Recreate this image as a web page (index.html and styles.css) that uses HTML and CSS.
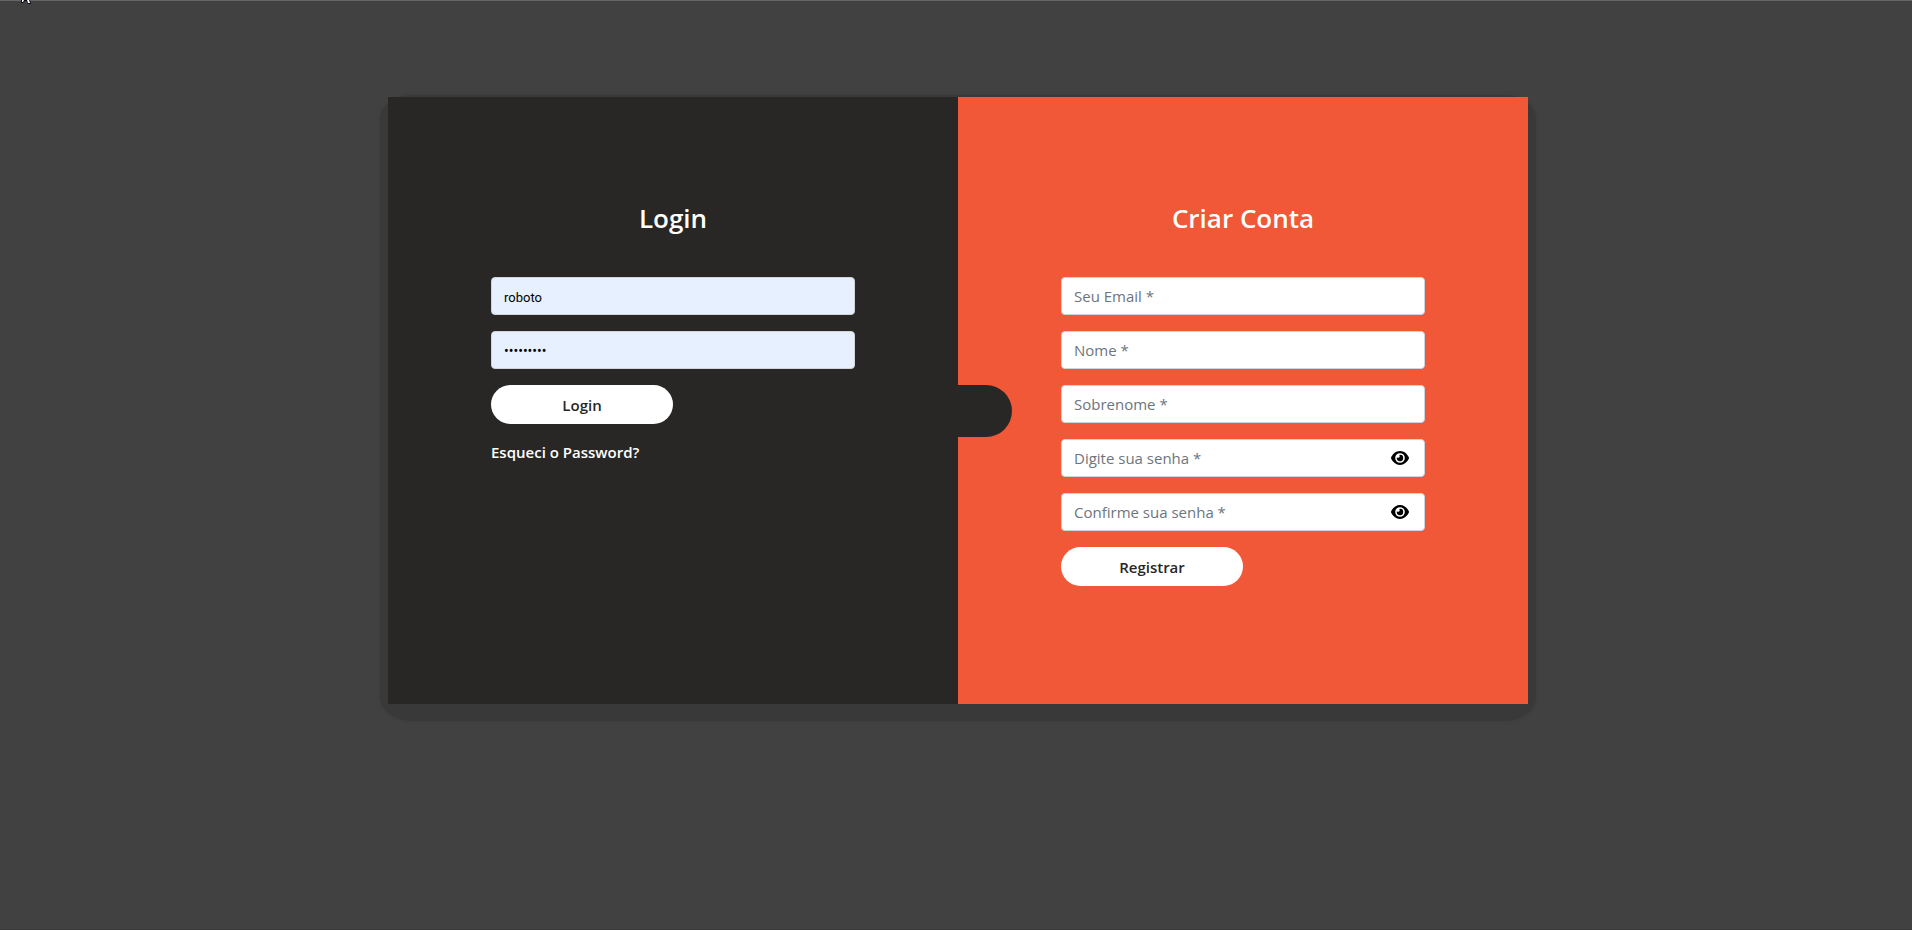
FILE: index.html
```html
<!DOCTYPE html>
<html lang="pt-BR">
<head>
<meta charset="utf-8">
<title>Login</title>
<link rel="stylesheet" href="styles.css">
</head>
<body>
<svg class="pointer" viewBox="0 0 12 5" aria-hidden="true">
  <path d="M1 0H6L3 3H1ZM5 0H10L11 4H8L7 2Z" fill="#0b0d1c"/>
  <path d="M2 0H4L3 2H2ZM7 0H9L10 3H8Z" fill="#fff"/>
</svg>
<main class="container">
  <section class="panel panel-login">
    <h1 class="title">Login</h1>
    <form class="form">
      <input class="field field-filled" type="text" aria-label="Usuário" value="roboto">
      <input class="field field-filled" type="password" aria-label="Senha" value="123456789">
      <button class="submit" type="button">Login</button>
      <a class="forgot" href="#">Esqueci o Password?</a>
    </form>
  </section>
  <section class="panel panel-register">
    <div class="tab" aria-hidden="true"></div>
    <h2 class="title">Criar Conta</h2>
    <form class="form">
      <input class="field" type="email" aria-label="Seu Email" placeholder="Seu Email *">
      <input class="field" type="text" aria-label="Nome" placeholder="Nome *">
      <input class="field" type="text" aria-label="Sobrenome" placeholder="Sobrenome *">
      <div class="secret">
        <input class="field" type="password" aria-label="Digite sua senha" placeholder="Digite sua senha *">
        <button class="reveal" type="button" aria-label="Mostrar senha"><svg class="eye" viewBox="0 0 18 14"><path fill-rule="evenodd" d="M9 0C13 0 16.300 2.800 17.900 6.400Q18.100 7 17.900 7.600C16.300 11.200 13 14 9 14S1.700 11.200 0.100 7.600Q-0.100 7 0.100 6.400C1.700 2.800 5 0 9 0ZM9 2.200A4.800 4.800 0 1 0 9 11.800A4.800 4.800 0 1 0 9 2.200Z"/><path d="M9 3.800A3.200 3.200 0 1 1 5.900 6.300A1.700 1.700 0 0 0 8.300 3.900Z"/></svg></button>
      </div>
      <div class="secret">
        <input class="field" type="password" aria-label="Confirme sua senha" placeholder="Confirme sua senha *">
        <button class="reveal" type="button" aria-label="Mostrar senha"><svg class="eye" viewBox="0 0 18 14"><path fill-rule="evenodd" d="M9 0C13 0 16.300 2.800 17.900 6.400Q18.100 7 17.900 7.600C16.300 11.200 13 14 9 14S1.700 11.200 0.100 7.600Q-0.100 7 0.100 6.400C1.700 2.800 5 0 9 0ZM9 2.200A4.800 4.800 0 1 0 9 11.800A4.800 4.800 0 1 0 9 2.200Z"/><path d="M9 3.800A3.200 3.200 0 1 1 5.900 6.300A1.700 1.700 0 0 0 8.300 3.900Z"/></svg></button>
      </div>
      <button class="submit" type="button">Registrar</button>
    </form>
  </section>
</main>
</body>
</html>
```

FILE: styles.css
```css
* {
  box-sizing: border-box;
}

body {
  margin: 0;
  min-height: 100vh;
  padding: 96px 0 96px 4px;
  border-top: 1px solid #666;
  border-bottom: 1px solid #383838;
  background: #414141;
  font-family: "Open Sans", "Noto Sans", sans-serif;
  font-size: 15px;
  line-height: 24px;
  color: #212529;
}

.pointer {
  position: absolute;
  top: 0;
  left: 20px;
  width: 12px;
  height: 5px;
}

.container {
  position: relative;
  z-index: 0;
  display: grid;
  grid-template-columns: 1fr 1fr;
  max-width: 1140px;
  margin: 0 auto;
}

/* soft halo around the card, heavier at the bottom */
.container::before {
  content: "";
  position: absolute;
  z-index: -1;
  inset: -2px -8px -17px;
  border-radius: 32px / 24px;
  background: #393939;
  box-shadow: 0 0 3px #3d3d3d;
}

.panel {
  position: relative;
  padding: 104px 103px 118px;
}

.panel-login {
  background: #282725;
}

.panel-register {
  background: #f05837;
}

.title {
  margin: 0 0 42px;
  font-size: 26px;
  font-weight: 600;
  line-height: 34px;
  text-align: center;
  color: #fff;
}

.form {
  display: flex;
  flex-direction: column;
  align-items: flex-start;
  gap: 16px;
}

.field {
  display: block;
  width: 100%;
  height: 38px;
  padding: 6px 12px;
  border: 1px solid #ced4da;
  border-radius: 4px;
  background: #fff;
  font: inherit;
  color: #495057;
}

.field::placeholder {
  color: #6c757d;
  opacity: 1;
}

.field-filled {
  padding-top: 8px;
  background: #e6f0fe;
  font-family: Roboto, sans-serif;
  font-size: 13px;
  color: #000;
}

.field-filled[type="password"] {
  font-size: 14px;
}

.secret {
  position: relative;
  width: 100%;
}

.reveal {
  position: absolute;
  top: 0;
  right: 16px;
  display: flex;
  align-items: center;
  height: 38px;
  padding: 0;
  border: 0;
  background: none;
}

.eye {
  width: 18px;
  height: 14px;
  fill: #000;
}

.submit {
  width: 50%;
  height: 39px;
  padding: 0;
  border: 0;
  border-radius: 20px;
  background: #fff;
  font: inherit;
  font-weight: 600;
  color: #282726;
}

.forgot {
  font-weight: 600;
  color: #fff;
  text-decoration: none;
}

/* dark tab reaching over from the login side */
.tab {
  position: absolute;
  top: 288px;
  left: 0;
  width: 54px;
  height: 52px;
  border-radius: 0 26px 26px 0;
  background: #282725;
}
```
